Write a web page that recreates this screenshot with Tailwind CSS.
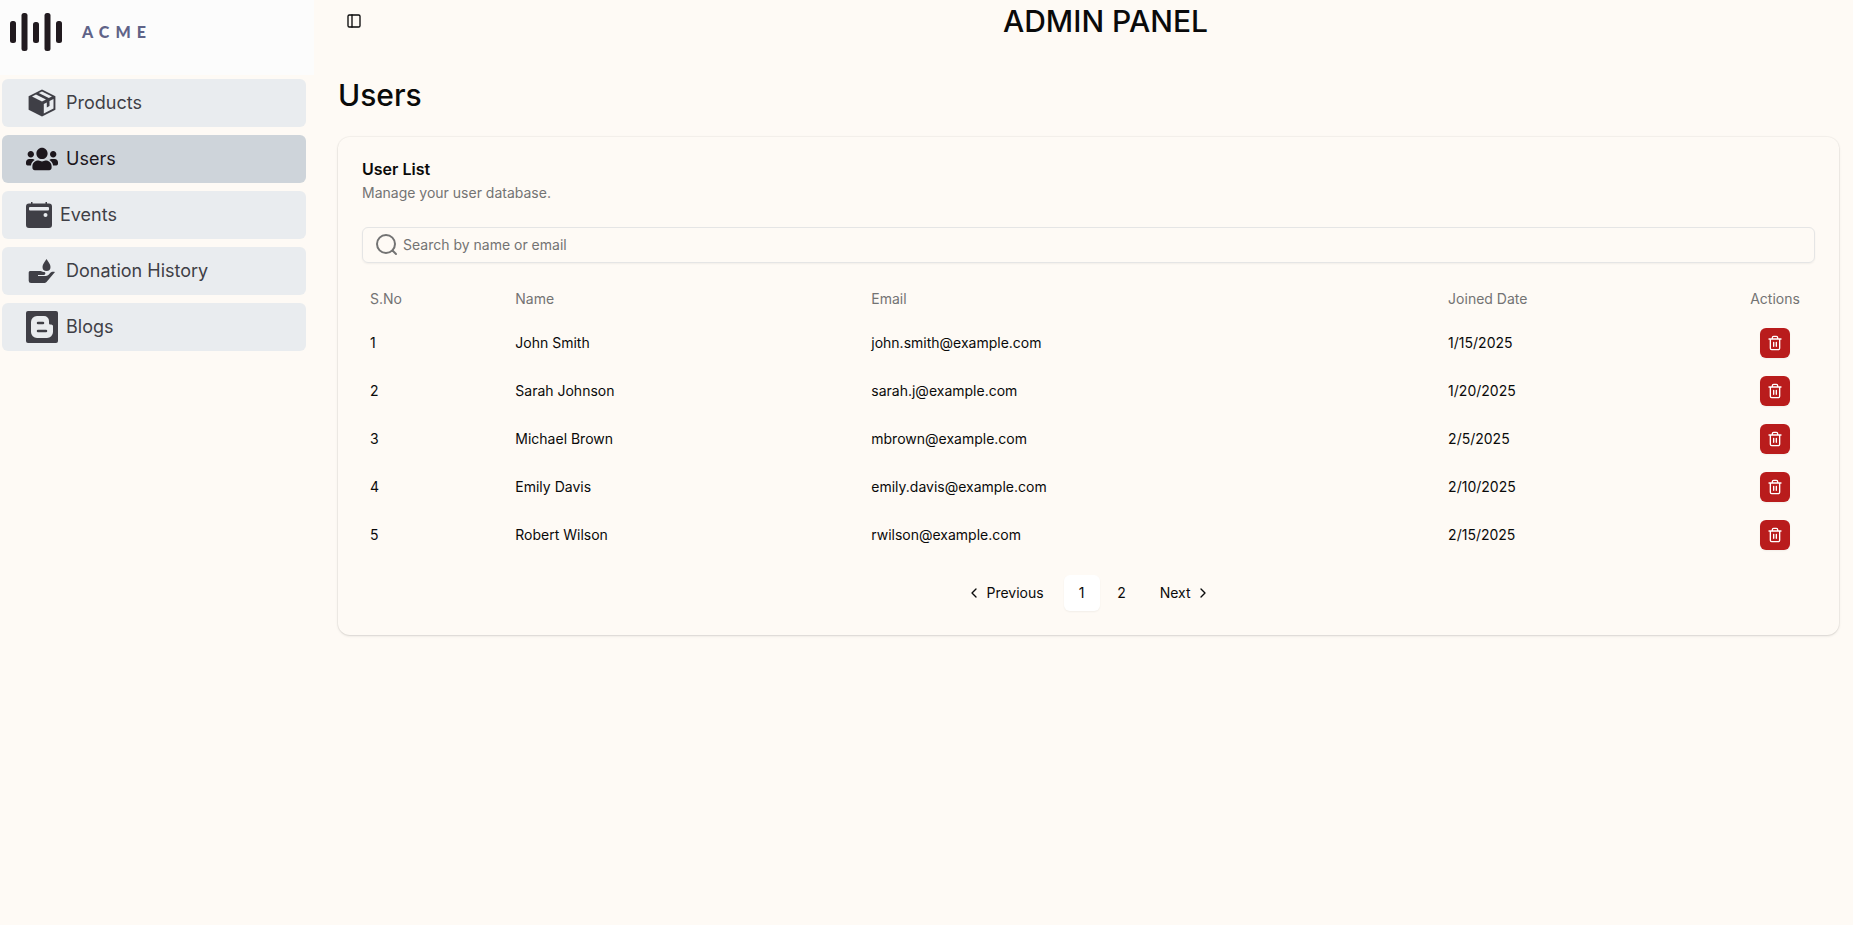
<!DOCTYPE html>
<html lang="en">
<head>
  <meta charset="UTF-8" />
  <meta name="viewport" content="width=device-width, initial-scale=1.0"/>
  <title>Admin Panel - Users</title>

  <!-- Tailwind CSS -->
  <script src="https://cdn.jsdelivr.net/npm/@tailwindcss/browser@4"></script>
</head>
<body class="flex min-h-screen bg-[#fefaf5] font-[Inter,sans-serif] text-sm text-neutral-950">

  <!-- Shared icons -->
  <svg class="hidden">
    <symbol id="trash" viewBox="0 0 24 24" fill="none" stroke="currentColor" stroke-width="2" stroke-linecap="round" stroke-linejoin="round">
      <path d="M3 6h18M19 6v14a2 2 0 0 1-2 2H7a2 2 0 0 1-2-2V6M8 6V4a2 2 0 0 1 2-2h4a2 2 0 0 1 2 2v2M10 11v6M14 11v6"/>
    </symbol>
  </svg>

  <!-- Sidebar -->
  <aside class="w-[314px] shrink-0">
    <a href="#" class="flex h-[75px] items-start gap-5 bg-[#fcfcfc] px-2.5 pt-3" aria-label="Acme home">
      <svg class="h-10 w-[52px]" viewBox="0 0 52 40" fill="#211a1f">
        <rect x="0" y="9" width="6" height="22" rx="2.5"/>
        <rect x="11.5" y="1" width="6" height="38" rx="2.5"/>
        <rect x="23" y="10" width="6" height="21" rx="2.5"/>
        <rect x="34.5" y="1" width="6" height="38" rx="2.5"/>
        <rect x="46" y="9" width="6" height="22" rx="2.5"/>
      </svg>
      <span class="font-[Lato,sans-serif] text-base leading-10 font-black tracking-[6px] text-[#5f6388]">ACME</span>
    </a>

    <nav class="mt-1 mr-2 ml-0.5 flex flex-col gap-2 text-lg text-[#3f3f46]">
      <a href="#" class="flex h-12 items-center gap-2 rounded-md bg-[#e9ecef] px-6">
        <svg class="size-8" viewBox="0 0 32 32">
          <path d="M16 2.5 29.400 9.300v13.400L16 29.400 2.600 22.700V9.300z" fill="currentColor"/>
          <path d="M6 9.500 10 7.400 20 12.500 16 14.600zM12.800 6 16 4.400 26 9.500 22.800 11.100zM17.800 17l3-1.500v5l2.700-1.400v-5l4-2v9.400L17.800 26.400z" fill="#e9ecef"/>
        </svg>
        Products
      </a>
      <a href="#" aria-current="page" class="flex h-12 items-center gap-2 rounded-md bg-[#ced4da] px-6 text-[#1c161c]">
        <svg class="size-8" viewBox="0 0 640 512" fill="currentColor">
          <path d="M96 224c35.3 0 64-28.7 64-64s-28.7-64-64-64-64 28.7-64 64 28.7 64 64 64zm448 0c35.3 0 64-28.7 64-64s-28.7-64-64-64-64 28.7-64 64 28.7 64 64 64zm32 32h-64c-17.6 0-33.5 7.1-45.1 18.6 40.3 22.1 68.9 62 75.1 109.4h66c17.7 0 32-14.3 32-32v-32c0-35.3-28.7-64-64-64zm-256 0c61.9 0 112-50.1 112-112S381.9 32 320 32 208 82.1 208 144s50.1 112 112 112zm76.8 32h-8.3c-20.8 10-43.9 16-68.5 16s-47.6-6-68.5-16h-8.3C179.600 288 128 339.600 128 403.200V432c0 26.500 21.500 48 48 48h288c26.500 0 48-21.500 48-48v-28.800c0-63.600-51.600-115.200-115.200-115.200zm-223.700-13.400C161.500 263.100 145.600 256 128 256H64c-35.300 0-64 28.700-64 64v32c0 17.700 14.300 32 32 32h65.900c6.300-47.400 34.900-87.300 75.200-109.400z"/>
        </svg>
        Users
      </a>
      <a href="#" class="flex h-12 items-center gap-2 rounded-md bg-[#e9ecef] px-6">
        <svg class="size-[26px]" viewBox="0 0 26 26">
          <path d="M3 1.500h2V0h1.500v1.500h13V0H21v1.500h2a3 3 0 0 1 3 3V23a3 3 0 0 1-3 3H3a3 3 0 0 1-3-3V4.500a3 3 0 0 1 3-3z" fill="currentColor"/>
          <rect x="3" y="5" width="20" height="3.500" rx="1" fill="#e9ecef"/>
          <circle cx="19.500" cy="13" r="2" fill="#e9ecef"/>
        </svg>
        Events
      </a>
      <a href="#" class="flex h-12 items-center gap-2 rounded-md bg-[#e9ecef] px-6">
        <svg class="size-8" viewBox="0 0 32 32" fill="currentColor">
          <path d="M20.500 4c-2 3-4 5.500-4 8a4 4 0 0 0 8 0c0-2.500-2-5-4-8z"/>
          <path d="M4 16h10.500c1.300 0 1.700 1 3 1h.5c1.700 0 2 2.600 0 3h-6v1h8c2.500 0 3.500-3 5.500-4 1-.5 2.300-.4 3.500 0l-8.500 10c-.8.800-1.500 1-2.500 1H5a2.300 2.300 0 0 1-2.300-2.300V17.500A1.500 1.500 0 0 1 4 16z"/>
        </svg>
        Donation History
      </a>
      <a href="#" class="flex h-12 items-center gap-2 rounded-md bg-[#e9ecef] px-6">
        <svg class="size-8" viewBox="0 0 32 32">
          <rect width="32" height="32" rx="2" fill="currentColor"/>
          <path d="M11 5h7a5 5 0 0 1 5 5v2c0 1 .5 1.500 1.500 1.500S27 14 27 15v6a6 6 0 0 1-6 6H11a6 6 0 0 1-6-6V11a6 6 0 0 1 6-6z" fill="#e9ecef"/>
          <path d="M12 12h5M12 20h8" stroke="currentColor" stroke-width="2.500" stroke-linecap="round"/>
        </svg>
        Blogs
      </a>
    </nav>
  </aside>

  <div class="min-w-0 flex-1">
    <!-- Top bar -->
    <header class="flex items-center pt-[3px] pr-2.5 pl-[26px]">
      <button type="button" class="flex size-7 items-center justify-center" aria-label="Toggle sidebar">
        <svg class="size-4" viewBox="0 0 24 24" fill="none" stroke="currentColor" stroke-width="2" stroke-linecap="round" stroke-linejoin="round">
          <rect width="18" height="18" x="3" y="3" rx="2"/><path d="M9 3v18"/>
        </svg>
      </button>
      <div class="flex-1 text-center text-3xl font-medium">ADMIN PANEL</div>
    </header>

    <main class="pt-[38px] pr-3.5 pl-6">
      <h1 class="text-3xl font-medium">Users</h1>

      <section class="mt-6 rounded-xl p-6 shadow-sm ring-1 ring-black/3">
        <h2 class="text-base leading-4 font-semibold">User List</h2>
        <p class="mt-1.5 text-neutral-500">Manage your user database.</p>

        <label class="mt-6 flex h-9 items-center gap-1 rounded-md border border-neutral-200 px-3 shadow-xs">
          <svg class="size-6 shrink-0 text-neutral-500" viewBox="0 0 24 24" fill="none" stroke="currentColor" stroke-width="2" stroke-linecap="round">
            <circle cx="11" cy="11" r="9"/><path d="m21 21-3.500-3.500"/>
          </svg>
          <input type="search" aria-label="Search users" placeholder="Search by name or email" class="w-full outline-none placeholder:text-neutral-500" />
        </label>

        <table class="mt-4 w-full table-fixed text-left">
          <colgroup>
            <col class="w-[10%]" /><col class="w-[24.5%]" /><col class="w-[39.7%]" /><col /><col class="w-20" />
          </colgroup>
          <thead>
            <tr class="h-10 text-neutral-500">
              <th class="px-2 font-normal">S.No</th>
              <th class="px-2 font-normal">Name</th>
              <th class="px-2 font-normal">Email</th>
              <th class="px-2 font-normal">Joined Date</th>
              <th class="px-2 text-center font-normal">Actions</th>
            </tr>
          </thead>
          <tbody id="userRows"></tbody>
        </table>

        <nav class="mt-4 flex items-center justify-center gap-1" aria-label="Pagination">
          <button type="button" class="flex h-9 items-center gap-1 px-4 pl-2.5">
            <svg class="size-4" viewBox="0 0 24 24" fill="none" stroke="currentColor" stroke-width="2" stroke-linecap="round" stroke-linejoin="round"><path d="m15 18-6-6 6-6"/></svg>
            Previous
          </button>
          <button type="button" aria-current="page" class="size-9 rounded-md bg-white shadow-xs">1</button>
          <button type="button" class="size-9">2</button>
          <button type="button" class="flex h-9 items-center gap-1 px-4 pr-2.5">
            Next
            <svg class="size-4" viewBox="0 0 24 24" fill="none" stroke="currentColor" stroke-width="2" stroke-linecap="round" stroke-linejoin="round"><path d="m9 18 6-6-6-6"/></svg>
          </button>
        </nav>
      </section>
    </main>
  </div>

  <script>
    const users = [
      { name: "John Smith", email: "john.smith@example.com", joined: "1/15/2025" },
      { name: "Sarah Johnson", email: "sarah.j@example.com", joined: "1/20/2025" },
      { name: "Michael Brown", email: "mbrown@example.com", joined: "2/5/2025" },
      { name: "Emily Davis", email: "emily.davis@example.com", joined: "2/10/2025" },
      { name: "Robert Wilson", email: "rwilson@example.com", joined: "2/15/2025" }
    ];

    // Render one table row per user
    document.getElementById("userRows").innerHTML = users.map((user, i) => `
      <tr class="h-12">
        <td class="px-2">${i + 1}</td>
        <td class="px-2">${user.name}</td>
        <td class="px-2">${user.email}</td>
        <td class="px-2">${user.joined}</td>
        <td class="px-2">
          <button type="button" aria-label="Delete ${user.name}" class="mx-auto flex size-[30px] items-center justify-center rounded-md bg-[#b91c1c] text-white shadow-xs">
            <svg class="size-4"><use href="#trash"/></svg>
          </button>
        </td>
      </tr>`).join("");
  </script>
</body>
</html>
